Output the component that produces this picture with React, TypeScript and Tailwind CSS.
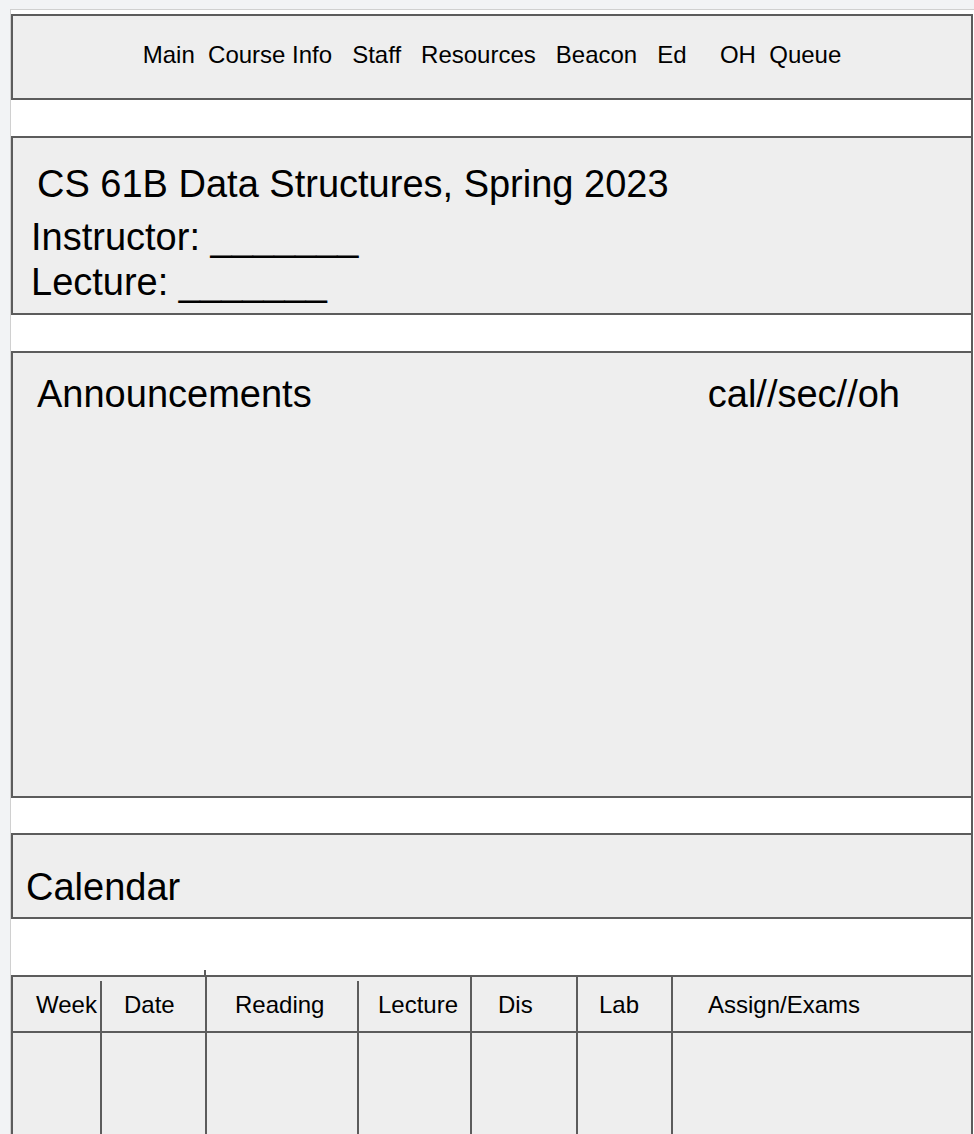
import React from "react";

const font = { fontFamily: '"Liberation Sans", Arial, Helvetica, sans-serif' };

export default function App() {
  const line = "border-[#5c5c5c]";
  return (
    <div
      className="w-[974px] h-[1134px] overflow-hidden bg-[#f2f3f5] pl-[10px] pt-[9px] text-black"
      style={font}
    >
      <div className="h-full border-l border-t border-[#d0d0d0] bg-white pt-[4px] pr-[1px]">
        <div className={`flex h-full flex-col border-r-2 ${line}`}>
          {/* Nav */}
          <div
            className={`flex h-[86px] shrink-0 items-center justify-center border-y-2 border-l-2 ${line} bg-[#eeeeee] pb-[4px]`}
          >
            <span className="whitespace-pre text-[24px] leading-[28px]">
              {"Main  Course Info   Staff   Resources   Beacon   Ed     OH  Queue"}
            </span>
          </div>
          <div className="h-[36px] shrink-0" />
          {/* Course header */}
          <div
            className={`h-[179px] shrink-0 border-y-2 border-l-2 ${line} bg-[#eeeeee] pt-[24px]`}
          >
            <div className="pl-[24px] text-[38px] leading-[44px]">
              CS 61B Data Structures, Spring 2023
            </div>
            <div className="mt-[9px] whitespace-pre pl-[18px] text-[38px] leading-[45px]">
              {"Instructor: _______"}
            </div>
            <div className="whitespace-pre pl-[18px] text-[38px] leading-[45px]">
              {"Lecture: _______"}
            </div>
          </div>
          <div className="h-[36px] shrink-0" />
          {/* Announcements */}
          <div
            className={`flex h-[447px] shrink-0 items-start border-y-2 border-l-2 ${line} bg-[#eeeeee] pt-[19px]`}
          >
            <div className="pl-[24px] text-[38px] leading-[44px]">Announcements</div>
            <div className="ml-auto pr-[71px] text-[38px] leading-[44px]">cal//sec//oh</div>
          </div>
          <div className="h-[35px] shrink-0" />
          {/* Calendar */}
          <div
            className={`h-[86px] shrink-0 border-y-2 border-l-2 ${line} bg-[#eeeeee] pt-[30px]`}
          >
            <div className="pl-[13px] text-[38px] leading-[44px]">Calendar</div>
          </div>
          <div className="flex h-[56px] shrink-0 items-end">
            <div className="ml-[193px] h-[5px] w-[2px] bg-[#5c5c5c]" />
          </div>
          {/* Table header */}
          <div
            className={`flex h-[58px] shrink-0 border-y-2 border-l-2 ${line} bg-[#eeeeee] pt-[2px] text-[24px] leading-[28px]`}
          >
            <div className="flex w-[87px] shrink-0 items-center pl-[23px]">Week</div>
            <div className={`mt-[2px] flex w-[105px] shrink-0 items-center border-l-2 ${line} pb-[2px] pl-[22px]`}>
              Date
            </div>
            <div className={`-mt-[2px] flex w-[152px] shrink-0 items-center border-l-2 ${line} pt-[2px] pl-[28px]`}>
              Reading
            </div>
            <div className={`mt-[2px] flex w-[113px] shrink-0 items-center border-l-2 ${line} pb-[2px] pl-[19px]`}>
              Lecture
            </div>
            <div className={`-mt-[2px] flex w-[106px] shrink-0 items-center border-l-2 ${line} pt-[2px] pl-[26px]`}>
              Dis
            </div>
            <div className={`-mt-[2px] flex w-[95px] shrink-0 items-center border-l-2 ${line} pt-[2px] pl-[21px]`}>
              Lab
            </div>
            <div className={`-mt-[2px] flex flex-1 items-center border-l-2 ${line} pt-[2px] pl-[35px]`}>
              Assign/Exams
            </div>
          </div>
          {/* Table body */}
          <div className={`flex h-[120px] shrink-0 border-l-2 ${line} bg-[#eeeeee]`}>
            <div className="w-[87px] shrink-0" />
            <div className={`w-[105px] shrink-0 border-l-2 ${line}`} />
            <div className={`w-[152px] shrink-0 border-l-2 ${line}`} />
            <div className={`w-[113px] shrink-0 border-l-2 ${line}`} />
            <div className={`w-[106px] shrink-0 border-l-2 ${line}`} />
            <div className={`w-[95px] shrink-0 border-l-2 ${line}`} />
            <div className={`flex-1 border-l-2 ${line}`} />
          </div>
        </div>
      </div>
    </div>
  );
}
